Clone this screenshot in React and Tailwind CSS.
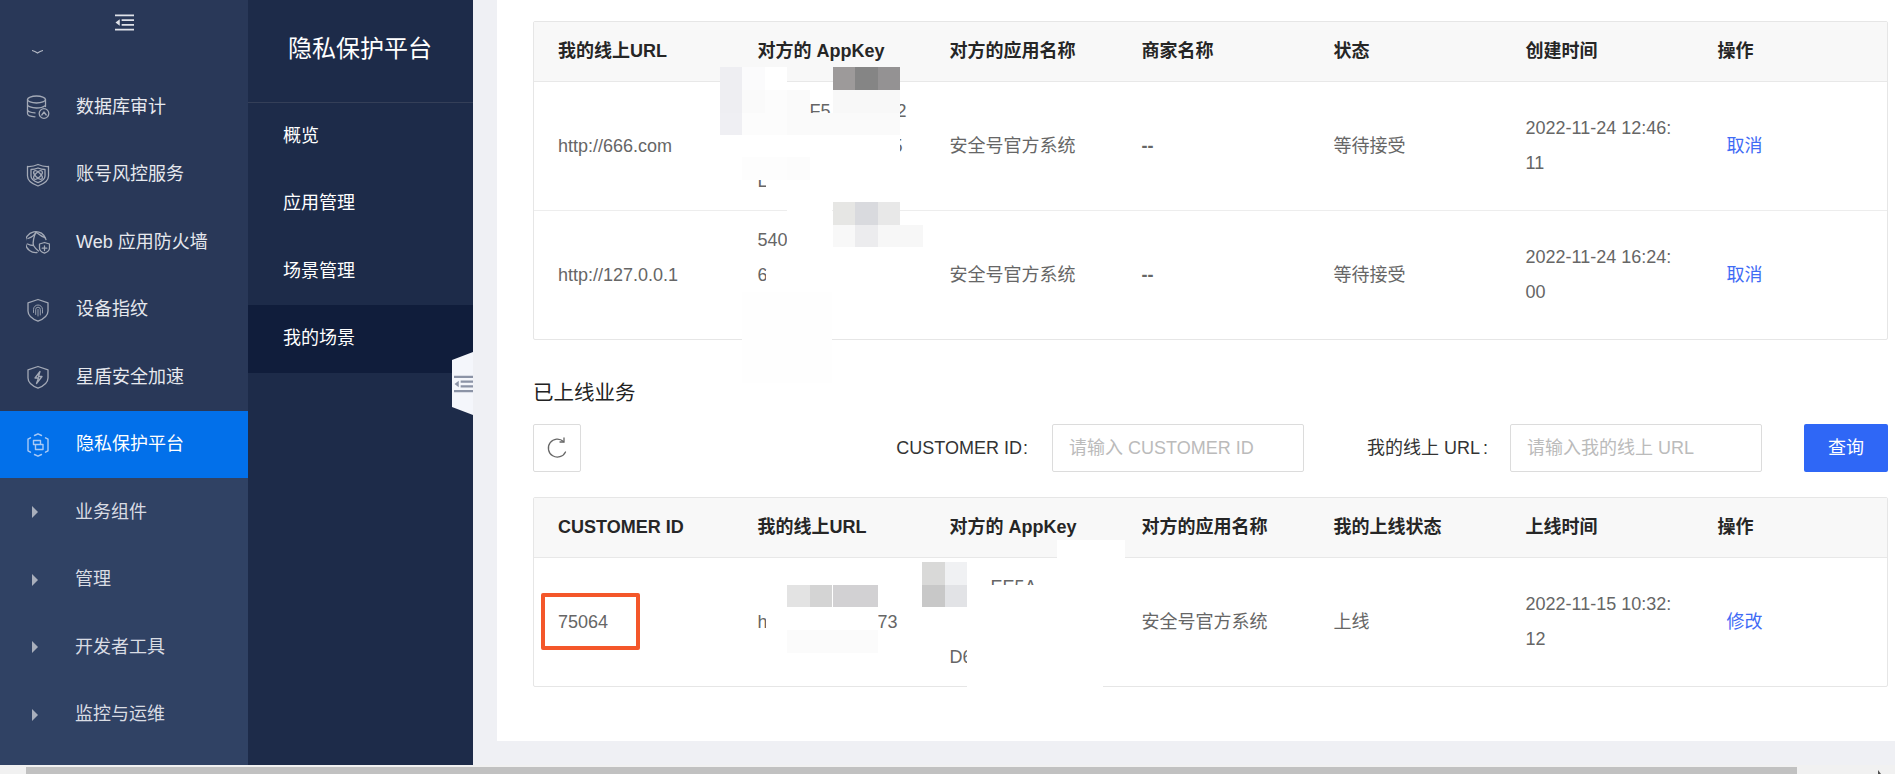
import React from "react";

const Ico = ({ children }) => (
  <svg viewBox="0 0 24 24" className="w-[24px] h-[24px] shrink-0" fill="none" stroke="#a3a9b6" strokeWidth="1.3" strokeLinecap="round" strokeLinejoin="round">
    {children}
  </svg>
);

const icons = {
  db: (
    <Ico>
      <ellipse cx="10.5" cy="4.5" rx="9" ry="3.5" />
      <path d="M1.5 4.5v14c0 1.6 3 3 7.5 3.3M19.5 4.5v7M1.5 9.5c0 1.9 4 3.5 9 3.5 3.5 0 6.5-.8 8-2M1.5 14.5c0 1.7 3.2 3.1 7.5 3.4" />
      <circle cx="18" cy="18.5" r="4.8" />
      <path d="M15.8 20l2.2-3 2.2 3" />
    </Ico>
  ),
  atom: (
    <Ico>
      <path d="M12 1.5c3.5 1.6 7 2.2 10.5 2v9.5c0 4.5-4 7.700-10.500 10C5.500 20.700 1.500 17.500 1.500 13V3.500C5 3.700 8.500 3.100 12 1.500z" />
      <path d="M12 5c2.800 1.200 4.500 1.500 7 1.500V13c0 2.800-2.500 5-7 6.700C7.500 18 5 15.800 5 13V6.500C7.500 6.500 9.200 6.200 12 5z" />
      <ellipse cx="12" cy="12" rx="5.500" ry="2.500" transform="rotate(45 12 12)" />
      <ellipse cx="12" cy="12" rx="5.500" ry="2.500" transform="rotate(-45 12 12)" />
    </Ico>
  ),
  globe: (
    <Ico>
      <path d="M20 9.500A10.500 10.500 0 1 0 11 22.500" />
      <path d="M2 8.500c3-1 6-2.500 8-6.500 2.500 2 5 4.500 9 5.500M10 2.500C8 6 6.500 12 7.500 15.500M1.500 14c2 1 4 1.500 6 1.500 1.500 2.500 3.500 4.500 5 5.500" />
      <path d="M18.500 13l5 1.500v4.200c0 2-2 3.800-5 5-3-1.200-5-3-5-5V14.500z" transform="translate(0 -0.500)" />
      <path d="M18.500 16v4.500M16.200 18.200h4.600" />
    </Ico>
  ),
  finger: (
    <Ico>
      <path d="M12 1.500l10 3.300V13c0 4.500-4 7.800-10 10.200C6 20.800 2 17.500 2 13V4.800z" />
      <path d="M7.500 14.500v-3a4.500 4.500 0 0 1 9 0v3.500M9.700 16.500v-5a2.300 2.300 0 0 1 4.600 0v5.500M12 11.500v6.500" strokeWidth="0.900" />
    </Ico>
  ),
  bolt: (
    <Ico>
      <path d="M12 1.500l10 3.300V13c0 4.500-4 7.800-10 10.200C6 20.800 2 17.500 2 13V4.800z" />
      <path d="M14 6.500l-5 6.500h3.500l-2 5.500 5.500-7h-3.500z" />
    </Ico>
  ),
  hex: (
    <svg viewBox="0 0 24 24" className="w-[24px] h-[24px] shrink-0" fill="none" stroke="#a9c9f5" strokeWidth="1.400" strokeLinecap="round" strokeLinejoin="round">
      <path d="M8.500 2.500L12 .800l3.500 1.700M19.500 4.800l2.500 1.400v11.600l-2.500 1.400M15.500 21.500L12 23.200l-3.500-1.700M4.500 19.200L2 17.800V6.200l2.500-1.400" />
      <path d="M7.500 7.500h7v4h-7zM9.500 11.500h7.500v5H9.500z" />
    </svg>
  ),
};

const Collapse = ({ className, color, width = 1.7 }) => (
  <svg viewBox="0 0 20 17" className={className} fill="none" stroke={color} strokeWidth={width}>
    <path d="M0 1h20M7 6h13M7 11h13M0 16h20" />
    <path d="M5 5L.5 8.500l4.500 3.500z" fill={color} stroke="none" />
  </svg>
);

const Caret = () => (
  <svg viewBox="0 0 6 12" className="w-[6px] h-[12px] shrink-0">
    <path d="M0 0l6 6-6 6z" fill="#a9afbc" />
  </svg>
);

const topItems = [
  ["db", "数据库审计"],
  ["atom", "账号风控服务"],
  ["globe", "Web 应用防火墙"],
  ["finger", "设备指纹"],
  ["bolt", "星盾安全加速"],
];
const subItems = ["业务组件", "管理", "开发者工具", "监控与运维"];

function Sidebar() {
  return (
    <aside className="w-[248px] shrink-0 bg-[#293858] flex flex-col overflow-hidden text-[18px] text-[#e6e8ee]">
      <div className="h-[40px] flex justify-center items-start pt-[14px]">
        <Collapse className="w-[19px] h-[17px]" color="#dfe2e9" />
      </div>
      <div className="h-[33.25px] pl-[32px] pt-[10px]">
        <svg viewBox="0 0 11 4" className="w-[11px] h-[4px]">
          <path d="M0 .5c2 .4 4 1.400 5.500 2.500C7 1.900 9 .9 11 .5" fill="none" stroke="#b4b9c5" strokeWidth="1.100" />
        </svg>
      </div>
      {topItems.map(([k, t]) => (
        <div key={t} className="h-[67.5px] shrink-0 flex items-center pl-[26px] gap-[26px]">
          {icons[k]}
          <span>{t}</span>
        </div>
      ))}
      <div className="h-[67.5px] shrink-0 flex items-center pl-[26px] gap-[26px] bg-[#0270ea] text-white">
        {icons.hex}
        <span>隐私保护平台</span>
      </div>
      <div className="flex-1 bg-[#304264] text-[#d9dce3]">
        {subItems.map((t) => (
          <div key={t} className="h-[67.5px] flex items-center pl-[32px] gap-[37px]">
            <Caret />
            <span>{t}</span>
          </div>
        ))}
      </div>
    </aside>
  );
}

function SubNav() {
  const items = ["概览", "应用管理", "场景管理", "我的场景"];
  return (
    <nav className="w-[225px] shrink-0 bg-[#1d2b49] text-white">
      <div className="h-[102.500px] border-b border-[#343f58] pl-[40px] flex items-center pb-[3px] text-[24px]">隐私保护平台</div>
      {items.map((t, i) => (
        <div key={t} className={`h-[67.5px] flex items-center pl-[35px] text-[18px] ${i === 3 ? "bg-[#101d3b]" : ""}`}>
          {t}
        </div>
      ))}
    </nav>
  );
}

const colWidths = ["w-[199.500px]", "w-[192px]", "w-[192px]", "w-[192px]", "w-[192px]", "w-[192px]", "w-[193.500px]"];

function DataTable({ head, rows }) {
  return (
    <div className="border border-[#e6e6e6] rounded-[2px]">
      <table className="w-full table-fixed border-separate border-spacing-0">
        <colgroup>
          {colWidths.map((w, i) => (
            <col key={i} className={w} />
          ))}
        </colgroup>
        <thead>
          <tr>
            {head.map((h, i) => (
              <th key={i} className="h-[60px] bg-[#f8f8f8] border-b border-[#e8e8e8] text-left font-bold text-[18px] text-[#262626] pl-[24px] whitespace-nowrap">
                {h}
              </th>
            ))}
          </tr>
        </thead>
        <tbody>
          {rows.map((r, ri) => (
            <tr key={ri}>
              {r.map((c, i) => (
                <td key={i} className={`pl-[24px] align-middle text-[18px] leading-[35px] text-[#666666] whitespace-nowrap ${ri < rows.length - 1 ? "h-[129px] border-b border-[#ededed]" : "h-[128px]"}`}>
                  {c}
                </td>
              ))}
            </tr>
          ))}
        </tbody>
      </table>
    </div>
  );
}

const Act = ({ children }) => <span className="inline-block pl-[9px] text-[#3f6bf5]">{children}</span>;
const Gap = ({ w }) => <span className={`inline-block ${w}`} />;
const Dash = () => <span className="font-bold">--</span>;

const Lines = ({ a, b, c }) => (
  <div>
    <div className="h-[35px]">{a}</div>
    <div className="h-[35px]">{b}</div>
    <div className="h-[35px]">{c}</div>
  </div>
);

const zoomTop = (x1, x2, y1, y2, c) => [520 + x1 / 2.24, y1 / 3, (x2 - x1) / 2.24, (y2 - y1) / 3, c];
const zoomLow = (x1, x2, y1, y2, c) => [520 + x1 / 2.24, 380 + y1 / 3, (x2 - x1) / 2.24, (y2 - y1) / 3, c];

const mosaic = [
  zoomTop(448, 498, 202, 270, "#eeeef2"),
  zoomTop(498, 549, 202, 270, "#fbfbfc"),
  zoomTop(549, 599, 202, 270, "#ffffff"),
  zoomTop(700, 750, 202, 270, "#9d9a9a"),
  zoomTop(750, 801, 202, 270, "#858585"),
  zoomTop(801, 851, 202, 270, "#949293"),
  zoomTop(448, 498, 270, 338, "#eeeef2"),
  zoomTop(498, 549, 270, 338, "#fafafa"),
  zoomTop(549, 599, 270, 338, "#fcfcfc"),
  zoomTop(599, 650, 270, 338, "#fafafa"),
  zoomTop(700, 851, 270, 338, "#f8f8f8"),
  zoomTop(448, 498, 338, 405, "#efeff3"),
  zoomTop(498, 599, 338, 405, "#fcfcfc"),
  zoomTop(599, 851, 338, 405, "#fafafa"),
  zoomTop(498, 851, 405, 472, "#ffffff"),
  zoomTop(498, 599, 472, 540, "#fdfdfd"),
  zoomTop(599, 650, 472, 540, "#fcfcfc"),
  zoomTop(550, 650, 540, 606, "#ffffff"),
  zoomTop(599, 700, 606, 674, "#ffffff"),
  zoomTop(700, 750, 606, 674, "#e6e6e4"),
  zoomTop(750, 801, 606, 674, "#d9dade"),
  zoomTop(801, 851, 606, 674, "#e8e8e8"),
  zoomTop(599, 650, 674, 742, "#ffffff"),
  zoomTop(700, 750, 674, 742, "#f8f8f8"),
  zoomTop(750, 801, 674, 742, "#ececee"),
  zoomTop(801, 902, 674, 742, "#f7f7f7"),
  zoomTop(599, 650, 742, 810, "#ffffff"),
  zoomTop(550, 650, 810, 877, "#ffffff"),
  zoomTop(498, 700, 877, 1148, "#fefefe"),
  zoomLow(598, 650, 615, 682, "#e3e3e3"),
  zoomLow(650, 700, 615, 682, "#d4d4d4"),
  zoomLow(700, 802, 615, 682, "#d2d1d3"),
  zoomLow(550, 802, 682, 750, "#ffffff"),
  zoomLow(598, 802, 750, 818, "#fbfbfb"),
  zoomLow(900, 951, 547, 615, "#d9d9d8"),
  zoomLow(951, 1002, 547, 615, "#f0f1f3"),
  zoomLow(900, 951, 615, 682, "#c8c8c8"),
  zoomLow(951, 1002, 615, 682, "#e2e3e6"),
  zoomLow(1203, 1355, 480, 547, "#ffffff"),
  zoomLow(1203, 1355, 547, 615, "#ffffff"),
  zoomLow(1002, 1355, 615, 750, "#ffffff"),
  zoomLow(1002, 1306, 750, 922, "#ffffff"),
];

const head1 = ["我的线上URL", "对方的 AppKey", "对方的应用名称", "商家名称", "状态", "创建时间", "操作"];
const head2 = ["CUSTOMER ID", "我的线上URL", "对方的 AppKey", "对方的应用名称", "我的上线状态", "上线时间", "操作"];

const rows1 = [
  [
    "http://666.com",
    <Lines a={<><Gap w="w-[52px]" />F5<Gap w="w-[66px]" />2</>} b={<><Gap w="w-[135px]" />5</>} c="L" />,
    "安全号官方系统",
    <Dash />,
    "等待接受",
    <>2022-11-24 12:46:<br />11</>,
    <Act>取消</Act>,
  ],
  [
    "http://127.0.0.1",
    <Lines a="540" b="6" c="" />,
    "安全号官方系统",
    <Dash />,
    "等待接受",
    <>2022-11-24 16:24:<br />00</>,
    <Act>取消</Act>,
  ],
];
const rows2 = [
  [
    "75064",
    <><span className="inline-block w-[120px]">h</span>73</>,
    <Lines a={<><Gap w="w-[41px]" />EE5A</>} b="" c="D6" />,
    "安全号官方系统",
    "上线",
    <>2022-11-15 10:32:<br />12</>,
    <Act>修改</Act>,
  ],
];

function Toolbar() {
  return (
    <div className="flex items-center mt-[17px] h-[48px] text-[18px]">
      <button className="w-[48px] h-[48px] border border-[#dcdcdc] rounded-[2px] flex items-center justify-center">
        <svg viewBox="0 0 22 22" className="w-[22px] h-[22px]" fill="none" stroke="#666666" strokeWidth="1.300" strokeLinecap="round">
          <path d="M17.500 4.500A9 9 0 1 0 19.500 15" />
          <path d="M18 1v4h-4" />
        </svg>
      </button>
      <span className="ml-auto text-[#333333]">CUSTOMER ID<span className="ml-[1px]">:</span></span>
      <div className="ml-[24px] w-[252px] h-[48px] border border-[#dcdcdc] rounded-[2px] flex items-center pl-[16px] text-[#bbbbbb]">请输入 CUSTOMER ID</div>
      <span className="ml-[63px] text-[#333333]">我的线上 URL<span className="ml-[3px]">:</span></span>
      <div className="ml-[22px] w-[252px] h-[48px] border border-[#dcdcdc] rounded-[2px] flex items-center pl-[16px] text-[#bbbbbb]">请输入我的线上 URL</div>
      <button className="ml-[42px] w-[84px] h-[48px] rounded-[2px] bg-[#2f67f6] text-white">查询</button>
    </div>
  );
}

export default function App() {
  return (
    <div className="relative w-[1895px] h-[774px] overflow-hidden bg-[#eff0f4] font-['Liberation_Sans','Noto_Sans_CJK_SC',sans-serif]">
      <div className="flex h-[765px]">
        <Sidebar />
        <SubNav />
        <main className="flex-1 pl-[24px]">
          <div className="h-[741px] bg-white pl-[36px] pr-[7px] pt-[21px]">
            <DataTable head={head1} rows={rows1} />
            <h2 className="mt-[39px] text-[20.500px] leading-[28px] font-normal text-[#222222]">已上线业务</h2>
            <Toolbar />
            <div className="mt-[25px]">
              <DataTable head={head2} rows={rows2} />
            </div>
          </div>
        </main>
      </div>
      <div className="h-[9px] bg-[#f1f1f1] pt-[2px] pl-[26px] flex justify-between">
        <div className="w-[1771px] h-[7px] bg-[#c1c1c1]" />
        <svg viewBox="0 0 6 4" className="w-[6px] h-[4px] mt-[3px] mr-[11px]">
          <path d="M0 0v4h3z" fill="#505050" />
        </svg>
      </div>

      {mosaic.map(([x, y, w, h, c], i) => (
        <div key={i} className="absolute" style={{ left: x, top: y, width: w, height: h, background: c }} />
      ))}

      <div className="absolute left-[452px] top-[352px] w-[21px] h-[63px] bg-[#f4f6fb] [clip-path:polygon(0_8px,100%_0,100%_100%,0_55px)] flex items-center justify-end">
        <Collapse className="w-[19px] h-[18px]" color="#8b93a6" width={2.4} />
      </div>

      <div className="absolute left-[541px] top-[593px] w-[99px] h-[57px] border-[4px] border-[#f4572a] rounded-[2px]" />
    </div>
  );
}
